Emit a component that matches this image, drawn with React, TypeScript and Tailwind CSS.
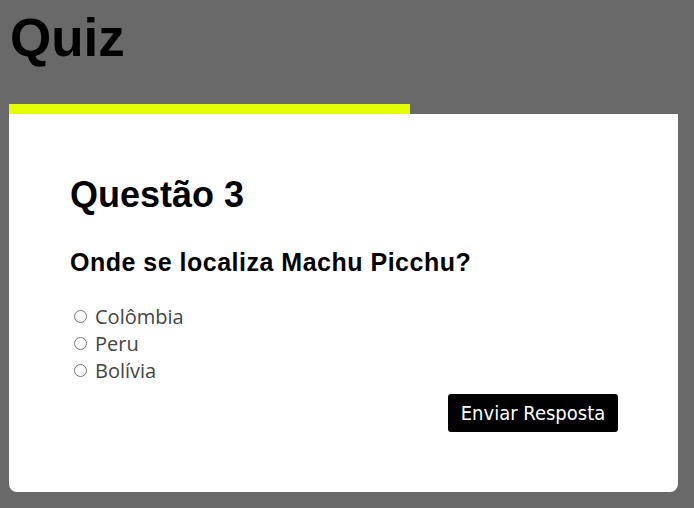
import { useState } from "react";

const options = ["Colômbia", "Peru", "Bolívia"];

export default function App() {
  const [answer, setAnswer] = useState("");

  return (
    <div className="min-h-[508px] bg-[#696969] pl-[9px] pr-4 pb-4">
      <h1 className="pt-[7px] pl-px text-[53px] leading-[62px] font-bold text-black [font-family:'Liberation_Sans',Arial,sans-serif]">
        Quiz
      </h1>
      <div className="mt-[35px] h-[10px] w-[401px] bg-[#e6ff00]" />
      <div className="rounded-b-lg bg-white pl-[61px] pr-[60px] pt-[60px] pb-[60px] [font-family:'Liberation_Sans',Arial,sans-serif]">
        <h2 className="text-[36px] leading-[42px] font-bold text-black">Questão 3</h2>
        <h3 className="mt-[32px] text-[25px] leading-[28px] font-bold tracking-[0.5px] text-black">
          Onde se localiza Machu Picchu?
        </h3>
        <div className="mt-[27px] flex flex-col [font-family:'Open_Sans',sans-serif]">
          {options.map((opt) => (
            <label key={opt} className="flex h-[27px] items-center gap-[8px] pl-[4px] text-[20px] text-[#444]">
              <input
                type="radio"
                name="q3"
                value={opt}
                checked={answer === opt}
                onChange={() => setAnswer(opt)}
                className="size-[13px]"
              />
              {opt}
            </label>
          ))}
        </div>
        <div className="mt-[10px] flex justify-end">
          <button className="h-[38px] w-[170px] rounded-[3px] bg-black text-[20px] text-white [font-family:'DejaVu_Sans_Condensed','DejaVu_Sans',sans-serif]">
            Enviar Resposta
          </button>
        </div>
      </div>
    </div>
  );
}
